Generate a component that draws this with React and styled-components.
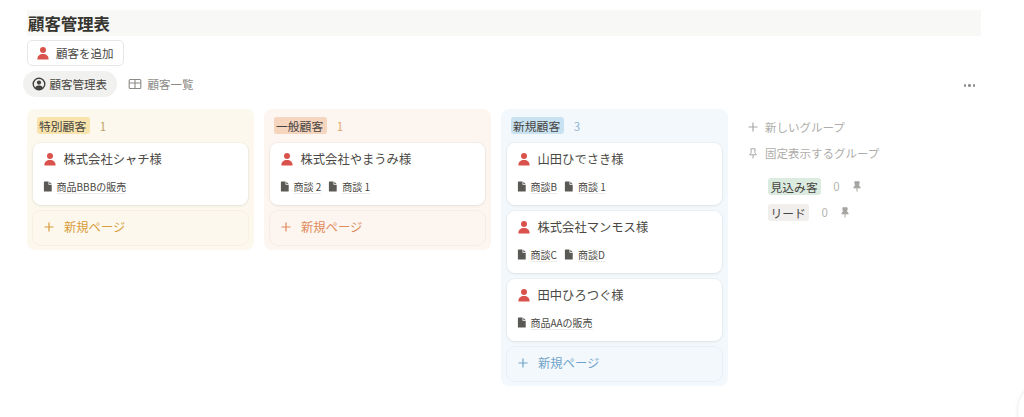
import React from "react";
import styled, { createGlobalStyle } from "styled-components";

const Global = createGlobalStyle`
  html, body { margin: 0; padding: 0; background: #fff; overflow: hidden; }
  body { font-family: "Noto Sans CJK JP", "Noto Sans", sans-serif; color: #37352f; }
`;

const Page = styled.div`
  width: 1024px; height: 417px; box-sizing: border-box; padding: 10px 43px 0 27px;
  position: relative; overflow: hidden;
`;
const Title = styled.h1`
  margin: 0; height: 26px; line-height: 26px; background: #f8f8f6;
  font-size: 16.4px; font-weight: 700; color: #37352f; padding-left: 1px;
`;
const AddButton = styled.button`
  display: flex; align-items: center; gap: 6px; margin-top: 4px; height: 26px; width: 97px;
  box-sizing: border-box; padding: 0 0 1px 8px; background: #fff; border: 1px solid #e8e7e4; border-radius: 5px;
  font: inherit; font-size: 11.5px; color: #4a4843;
`;
const Tabs = styled.div`
  display: flex; align-items: center; justify-content: space-between; margin: 5px 0 0 -4px; height: 26px;
`;
const TabGroup = styled.div` display: flex; align-items: center; gap: 2px; `;
const Tab = styled.div`
  display: flex; align-items: center; gap: 4px; height: 26px; box-sizing: border-box; padding: 0 10px 0 8.500px;
  border-radius: 13px; font-size: 11.5px; background: ${p => p.$active ? "#f1f1f0" : "transparent"};
  color: ${p => p.$active ? "#4a4843" : "#8c8a85"};
`;
const More = styled.div`
  display: flex; gap: 2px; margin: 3px 6px 0 0;
  i { width: 2.5px; height: 2.5px; border-radius: 50%; background: #8f8e8a; display: block; }
`;
const Board = styled.div` display: flex; align-items: flex-start; gap: 10px; margin-top: 12px; `;
const Column = styled.section`
  width: 227px; box-sizing: border-box; padding: 6px 6px 5px; border-radius: 8px; background: ${p => p.$bg};
  display: flex; flex-direction: column; gap: 6px;
`;
const GroupHead = styled.div` display: flex; align-items: center; gap: 10px; height: 21px; margin: 0 0 1px 3.5px; `;
const Tag = styled.span`
  display: inline-block; height: 17px; line-height: 17px; padding: 0 3.5px 0 2.5px; border-radius: 3px;
  font-size: 11.8px; background: ${p => p.$bg}; color: #46443f; white-space: nowrap;
`;
const Count = styled.span` font-size: 11.5px; color: ${p => p.$color}; `;
const Card = styled.article`
  height: 62px; box-sizing: border-box; padding: 6px 10px 0 9.5px; background: #fff; border-radius: 8px;
  box-shadow: 0 0 0 1px rgba(40,40,30,.03), 0 1px 3px rgba(40,40,30,.07);
`;
const CardTitle = styled.div`
  display: flex; align-items: center; gap: 7px; height: 20px; font-size: 12.300px; color: #4a4843;
`;
const Links = styled.div` display: flex; align-items: center; gap: 7px; margin-top: 9.5px; height: 16px; `;
const DocLink = styled.span`
  display: flex; align-items: center; gap: 4px; font-size: 10px; color: #4a4843;
  span { border-bottom: 1px solid #ecebe8; line-height: 13px; }
`;
const NewPage = styled.div`
  display: flex; align-items: center; gap: 10px; height: 34px; box-sizing: border-box; padding: 0 0 2px 11px;
  border-radius: 8px; font-size: 12.300px; color: ${p => p.$color};
  box-shadow: 0 0 0 1px ${p => p.$line};
`;
const Side = styled.aside` margin-left: 0; padding-top: 5px; width: 190px; `;
const SideRow = styled.div`
  display: flex; align-items: center; gap: 7px; height: 26px; padding-left: 10px;
  font-size: 11.5px; color: #aeada9;
`;
const HiddenRow = styled.div`
  display: flex; align-items: center; gap: 12px; height: 26px; padding-left: 30px;
  font-size: 11.5px; color: #b5b4b0;
  &:nth-child(3) { margin-top: 7px; }
`;
const Bubble = styled.div`
  position: absolute; left: 1018px; top: 381px; width: 60px; height: 60px; border-radius: 50%;
  background: #fff; box-shadow: 0 0 4px rgba(0,0,0,.12);
`;

const Person = () => (
  <svg width="14" height="14" viewBox="0 0 14 14" fill="#d9534c" style={{ flex: "none" }}>
    <circle cx="7" cy="3.9" r="3" />
    <path d="M1.4 13c0-3 2.3-5 5.6-5s5.6 2 5.6 5c0 .4-.3.6-.7.6H2.100c-.4 0-.7-.2-.7-.6z" />
  </svg>
);
const Doc = () => (
  <svg width="10" height="11" viewBox="0 0 10 11" fill="#5a5955" style={{ flex: "none" }}>
    <path d="M1.500 .5h4v3.200h3.200V10a.6.6 0 0 1-.6.6H1.500a.6.6 0 0 1-.6-.6V1.100a.6.6 0 0 1 .6-.6z" />
    <path d="M6.300.7l2.300 2.300H6.300z" />
  </svg>
);
const Plus = ({ color, size = 10 }) => (
  <svg width={size} height={size} viewBox="0 0 10 10" stroke={color} strokeWidth="1.200" fill="none" style={{ flex: "none" }}>
    <path d="M5 .5v9M.5 5h9" />
  </svg>
);
const Pin = ({ filled, color, size = 10 }) => (
  <svg width={size} height={size + 1} viewBox="0 0 10 11" fill={filled ? color : "none"} stroke={color} strokeWidth="1" style={{ flex: "none" }}>
    <path d="M2.800 .8h4.400L6.700 4.600 8.300 6.800H1.700L3.300 4.600zM5 6.800V10.500" />
  </svg>
);
const UserCircle = () => (
  <svg width="14" height="14" viewBox="0 0 14 14" style={{ flex: "none" }}>
    <circle cx="7" cy="7" r="5.800" fill="none" stroke="#44423e" strokeWidth="1.400" />
    <circle cx="7" cy="5.600" r="2.100" fill="#44423e" />
    <path d="M3.200 10.600C4 9 5.300 8.500 7 8.500s3 .5 3.800 2.100C9.800 11.700 8.500 12.300 7 12.300s-2.800-.6-3.800-1.700z" fill="#44423e" />
  </svg>
);
const TableIcon = () => (
  <svg width="14" height="14" viewBox="0 0 14 14" fill="none" stroke="#8c8a85" strokeWidth="1.100" style={{ flex: "none", marginRight: 2 }}>
    <rect x="1.200" y="2.500" width="11.600" height="9" rx="1" />
    <path d="M1.200 6h11.600M7 2.500v9" />
  </svg>
);

const groups = [
  {
    name: "特別顧客", count: 1, bg: "#fcf8ee", tag: "#f7e3ab", countColor: "#c2a266", plus: "#d99c3a", line: "#f5f0df",
    cards: [{ title: "株式会社シャチ様", links: ["商品BBBの販売"] }],
  },
  {
    name: "一般顧客", count: 1, bg: "#fdf5ef", tag: "#f6d5bf", countColor: "#e3a871", plus: "#e08a5b", line: "#f9ebe2",
    cards: [{ title: "株式会社やまうみ様", links: ["商談 2", "商談 1"] }],
  },
  {
    name: "新規顧客", count: 3, bg: "#f3f8fc", tag: "#c8e2f1", countColor: "#8db4d2", plus: "#6fa3c9", line: "#e7eff5",
    cards: [
      { title: "山田ひでさき様", links: ["商談B", "商談 1"] },
      { title: "株式会社マンモス様", links: ["商談C", "商談D"] },
      { title: "田中ひろつぐ様", links: ["商品AAの販売"] },
    ],
  },
];

export default function App() {
  return (
    <Page>
      <Global />
      <Title>顧客管理表</Title>
      <AddButton><Person />顧客を追加</AddButton>
      <Tabs>
        <TabGroup>
          <Tab $active><UserCircle />顧客管理表</Tab>
          <Tab><TableIcon />顧客一覧</Tab>
        </TabGroup>
        <More><i /><i /><i /></More>
      </Tabs>
      <Board>
        {groups.map(g => (
          <Column key={g.name} $bg={g.bg}>
            <GroupHead>
              <Tag $bg={g.tag}>{g.name}</Tag>
              <Count $color={g.countColor}>{g.count}</Count>
            </GroupHead>
            {g.cards.map(c => (
              <Card key={c.title}>
                <CardTitle><Person />{c.title}</CardTitle>
                <Links>
                  {c.links.map(l => <DocLink key={l}><Doc /><span>{l}</span></DocLink>)}
                </Links>
              </Card>
            ))}
            <NewPage $color={g.plus} $line={g.line}><Plus color={g.plus} />新規ページ</NewPage>
          </Column>
        ))}
        <Side>
          <SideRow><Plus color="#a9a8a4" />新しいグループ</SideRow>
          <SideRow><Pin color="#a9a8a4" />固定表示するグループ</SideRow>
          <HiddenRow><Tag $bg="#dcebdf">見込み客</Tag>0<Pin filled color="#a5a4a0" /></HiddenRow>
          <HiddenRow><Tag $bg="#f1efed">リード</Tag>0<Pin filled color="#a5a4a0" /></HiddenRow>
        </Side>
      </Board>
      <Bubble />
    </Page>
  );
}
